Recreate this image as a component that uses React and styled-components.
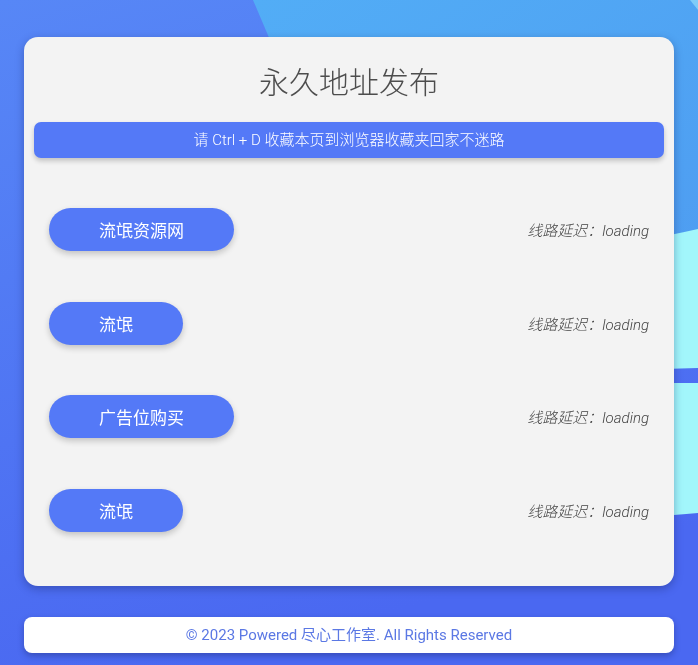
import React from "react";
import styled, { createGlobalStyle } from "styled-components";

const GlobalStyle = createGlobalStyle`
  html, body {
    margin: 0;
    padding: 0;
  }
  body {
    font-family: Roboto, "Noto Sans CJK SC", sans-serif;
    background: #4f72f3;
  }
`;

const links = [
  { name: "流氓资源网" },
  { name: "流氓" },
  { name: "广告位购买" },
  { name: "流氓" },
];

function Backdrop() {
  return (
    <BgSvg viewBox="0 0 698 665" preserveAspectRatio="none">
      <defs>
        <linearGradient id="base" x1="0" y1="0" x2="0.3" y2="1">
          <stop offset="0" stopColor="#5787f6" />
          <stop offset="1" stopColor="#4a68f1" />
        </linearGradient>
        <linearGradient id="sky" x1="0" y1="0" x2="1" y2="1">
          <stop offset="0" stopColor="#52adf6" />
          <stop offset="1" stopColor="#4e9cf1" />
        </linearGradient>
      </defs>
      <rect x="0" y="0" width="698" height="665" fill="url(#base)" />
      <path d="M253 0 L698 0 L698 300 L600 300 C450 260 330 200 270 40 Z" fill="url(#sky)" />
      <path d="M690 0 L698 0 L698 10 Z" fill="#9fe6fb" opacity="0.6" />
      <path d="M560 250 C610 245 660 238 698 229 L698 368 L560 372 Z" fill="#a2f6fb" />
      <path d="M560 383 L698 383 L698 513 C660 516 610 520 560 522 Z" fill="#a2f6fb" />
    </BgSvg>
  );
}

function App() {
  return (
    <>
      <GlobalStyle />
      <Backdrop />
      <Page>
        <Card>
          <Title>永久地址发布</Title>
          <Notice>请 Ctrl + D 收藏本页到浏览器收藏夹回家不迷路</Notice>
          <List>
            {links.map((item, i) => (
              <Row key={i}>
                <LinkButton>{item.name}</LinkButton>
                <Latency>线路延迟：loading</Latency>
              </Row>
            ))}
          </List>
        </Card>
        <Footer>© 2023 Powered 尽心工作室. All Rights Reserved</Footer>
      </Page>
    </>
  );
}

const BgSvg = styled.svg`
  position: fixed;
  inset: 0;
  width: 100%;
  height: 100%;
  z-index: 0;
`;

const Page = styled.div`
  position: relative;
  z-index: 1;
  padding: 37px 24px 12px;
  min-height: 665px;
  box-sizing: border-box;
`;

const Card = styled.section`
  background: #f3f3f3;
  border-radius: 14px;
  padding: 24px 10px 29px;
  box-shadow: 0 3px 8px rgba(20, 30, 90, 0.35);
`;

const Title = styled.h1`
  margin: 0;
  text-align: center;
  font-size: 30px;
  line-height: 44px;
  font-weight: 300;
  color: #4d4d4d;
`;

const Notice = styled.div`
  margin-top: 17px;
  height: 36px;
  line-height: 36px;
  border-radius: 7px;
  background: #5479f7;
  color: #ffffff;
  font-size: 15px;
  font-weight: 300;
  text-align: center;
  box-shadow: 0 3px 5px rgba(0, 0, 0, 0.2);
`;

const List = styled.div`
  margin-top: 25px;
  display: flex;
  flex-direction: column;
`;

const Row = styled.div`
  height: 93.5px;
  display: flex;
  align-items: center;
  justify-content: space-between;
  padding: 0 15px;
`;

const LinkButton = styled.a`
  display: inline-flex;
  align-items: center;
  height: 43px;
  padding: 0 50px;
  border-radius: 22px;
  background: #5479f7;
  color: #ffffff;
  font-size: 17px;
  cursor: pointer;
  box-shadow: 0 3px 6px rgba(0, 0, 0, 0.2);
`;

const Latency = styled.span`
  font-size: 15px;
  font-style: italic;
  font-weight: 300;
  color: #444;
`;

const Footer = styled.footer`
  margin-top: 31px;
  height: 36px;
  line-height: 36px;
  background: #ffffff;
  border-radius: 8px;
  text-align: center;
  font-size: 15px;
  color: #5b78e4;
  box-shadow: 0 3px 6px rgba(20, 30, 90, 0.35);
`;

export default App;
